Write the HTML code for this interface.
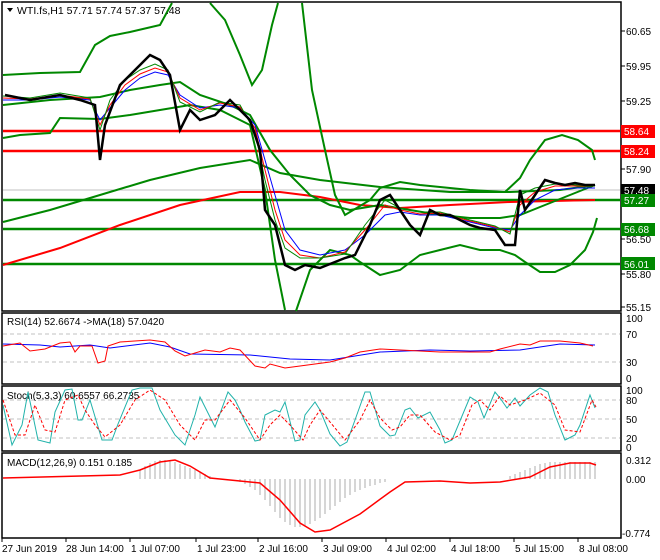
<!DOCTYPE html>
<html><head><meta charset="utf-8"><style>
body{margin:0;background:#fff;width:660px;height:560px;overflow:hidden;font-family:"Liberation Sans",sans-serif}
svg{display:block}
text{font-family:"Liberation Sans",sans-serif;font-size:10px;fill:#000}
</style></head><body>
<svg width="660" height="560" viewBox="0 0 660 560">
<rect width="660" height="560" fill="#fff"/>
<g fill="none" stroke="#000" stroke-width="1.5">
<rect x="2" y="2" width="619" height="309"/>
<rect x="2" y="313" width="619" height="71"/>
<rect x="2" y="386" width="619" height="65"/>
<rect x="2" y="453" width="619" height="85"/>
</g>
<line x1="3" y1="190" x2="620" y2="190" stroke="#c0c0c0"/>
<g stroke-width="2.5" fill="none">
<line x1="3" y1="131" x2="620" y2="131" stroke="#f00"/>
<line x1="3" y1="151" x2="620" y2="151" stroke="#f00"/>
<line x1="3" y1="200" x2="620" y2="200" stroke="#080"/>
<line x1="3" y1="229" x2="620" y2="229" stroke="#080"/>
<line x1="3" y1="264" x2="620" y2="264" stroke="#080"/>
</g>
<g fill="none" stroke-width="2">
<polyline stroke="#f00" points="3,265 60,248 120,225 180,205 240,192 280,192 320,197 360,205 400,208 450,205 510,202 595,200"/>
<polyline stroke="#080" points="3,222 50,210 100,195 150,180 200,168 250,160 280,173 320,180 380,187 450,192 510,192 560,190 595,185"/>
<polyline stroke="#080" points="3,105 50,100 100,97 130,90 160,85 180,82 200,95 230,105 250,115 270,150 290,175 310,195 330,205 350,210 380,205 410,210 440,215 470,218 500,218 520,215 545,205 570,195 595,185"/>
<polyline stroke="#080" points="3,75 40,73 80,72 95,45 110,36 130,32 160,25 172,3"/>
<polyline stroke="#080" points="210,3 225,20 240,55 252,85 262,70 272,25 278,3"/>
<polyline stroke="#080" points="302,3 312,90 325,150 335,195 345,215 370,200 380,188 400,182 420,185 440,187 470,190 505,192 520,178 530,160 545,140 562,135 578,140 592,150 595,160"/>
<polyline stroke="#080" points="3,138 20,135 50,133 60,118 100,119 130,115 160,110 190,105 220,110 250,125 265,190 275,260 285,310"/>
<polyline stroke="#080" points="296,311 310,270 330,250 350,255 360,262 380,275 400,270 420,255 440,250 460,245 480,250 500,250 515,255 525,262 540,272 555,272 570,265 585,250 593,232 597,218"/>
</g>
<g fill="none" stroke-width="1">
<polyline stroke="#00f" points="3,100 30,100 60,97 90,100 100,120 110,108 125,90 140,78 155,72 168,75 180,95 200,108 220,105 240,108 255,125 265,160 275,195 285,230 300,250 320,255 345,250 365,235 385,215 400,212 420,215 440,215 470,222 495,228 510,230 520,215 535,200 555,190 575,188 595,188"/>
<polyline stroke="#f00" points="3,98 30,99 60,95 90,99 100,125 110,105 125,85 140,74 155,68 168,72 180,98 200,110 220,103 240,107 255,128 265,170 275,210 285,240 300,255 320,258 345,252 365,230 385,205 400,210 420,214 440,213 470,221 495,227 510,232 520,205 535,192 555,186 575,186 595,186"/>
<polyline stroke="#080" points="3,96 30,98 60,93 90,98 100,130 110,100 125,80 140,70 155,64 168,70 180,102 200,112 220,102 240,105 255,132 265,180 275,220 285,248 300,258 320,258 345,254 365,225 385,200 400,208 420,212 440,212 470,220 495,226 510,234 520,195 535,188 555,184 575,185 595,186"/>
</g>
<polyline fill="none" stroke="#000" stroke-width="2.5" points="5,95 30,100 60,95 80,100 95,105 100,160 105,125 120,85 140,65 150,55 160,60 170,75 180,130 190,110 200,120 215,115 230,100 240,110 250,120 260,150 265,210 275,225 285,265 295,270 305,265 320,268 335,262 345,258 355,255 360,245 370,225 380,200 390,195 400,210 410,225 420,235 430,210 440,215 450,215 460,220 470,225 480,228 495,230 505,245 515,245 520,190 525,210 535,195 545,180 555,183 565,185 575,183 585,185 595,185"/>
<path d="M7 8 L13 8 L10 12 Z" fill="#000"/>
<text x="17" y="14" style="font-size:10.5px">WTI.fs,H1  57.71 57.74 57.37 57.48</text>
<g stroke="#000"><path d="M621 31h4M621 66h4M621 101h4M621 169h4M621 239h4M621 274h4M621 307h4"/></g>
<text x="626" y="35">60.65</text><text x="626" y="70">59.95</text><text x="626" y="105">59.25</text>
<text x="626" y="173">57.90</text><text x="626" y="243">56.50</text><text x="626" y="278">55.80</text><text x="626" y="311">55.15</text>
<rect x="621" y="125" width="34" height="13" fill="#f00"/><text x="624" y="135" style="fill:#fff">58.64</text>
<rect x="621" y="145" width="34" height="13" fill="#f00"/><text x="624" y="155" style="fill:#fff">58.24</text>
<rect x="621" y="184" width="34" height="13" fill="#000"/><text x="624" y="194" style="fill:#fff">57.48</text>
<rect x="621" y="194" width="34" height="13" fill="#080"/><text x="624" y="204" style="fill:#fff">57.27</text>
<rect x="621" y="223" width="34" height="13" fill="#080"/><text x="624" y="233" style="fill:#fff">56.68</text>
<rect x="621" y="257" width="34" height="13" fill="#080"/><text x="624" y="268" style="fill:#fff">56.01</text>
<g stroke="#c0c0c0" stroke-dasharray="4,3"><line x1="3" y1="334" x2="620" y2="334"/><line x1="3" y1="362" x2="620" y2="362"/></g>
<text x="7" y="325">RSI(14) 52.6674  -&gt;MA(18) 57.0420</text>
<polyline fill="none" stroke="#00f" points="3,344 40,345 60,347 90,345 110,348 150,343 170,347 190,354 250,355 290,359 330,360 380,352 430,350 470,351 520,350 560,344 595,345"/>
<polyline fill="none" stroke="#f00" points="3,346 20,343 30,351 45,349 60,343 70,342 75,352 80,346 92,346 98,363 105,361 108,346 120,342 150,340 165,342 175,351 185,356 205,350 220,352 230,348 240,350 255,366 265,368 270,364 285,368 300,366 330,362 345,358 360,352 380,349 400,350 420,351 440,352 470,352 490,352 500,349 520,344 530,345 540,341 560,341 580,343 593,346"/>
<text x="626" y="322">100</text><text x="626" y="338">70</text><text x="626" y="366">30</text><text x="626" y="382">0</text>
<g stroke="#c0c0c0" stroke-dasharray="4,3"><line x1="3" y1="400" x2="620" y2="400"/><line x1="3" y1="419" x2="620" y2="419"/><line x1="3" y1="438" x2="620" y2="438"/></g>
<text x="7" y="399">Stoch(5,3,3) 60.6557 66.2735</text>
<polyline fill="none" stroke="#20b2aa" points="3,405 12,445 22,425 28,392 38,440 50,443 55,412 65,390 72,389 78,420 82,420 90,400 102,440 112,440 118,424 132,390 140,388 152,388 160,410 175,435 185,445 195,415 200,397 205,407 215,427 228,392 235,400 240,410 245,422 255,441 260,440 265,415 275,410 280,412 285,402 295,441 300,440 305,415 315,402 320,410 330,434 340,446 347,442 355,420 365,392 370,392 380,426 390,436 395,435 405,410 410,408 418,418 430,412 440,430 445,443 452,440 470,397 478,402 484,418 495,392 500,398 507,408 515,398 520,406 530,395 540,388 548,392 555,415 565,440 575,435 580,425 590,395 595,408"/>
<polyline fill="none" stroke="#f00" stroke-dasharray="3,2" points="3,400 15,435 25,435 35,405 45,430 55,432 65,400 78,395 85,410 95,425 105,437 120,425 135,400 150,390 165,400 180,425 195,440 205,420 215,420 230,400 245,418 260,440 270,425 280,415 290,425 303,440 310,425 320,410 335,428 345,440 360,420 370,400 380,418 392,430 400,427 410,415 420,415 435,432 450,440 460,435 472,405 480,400 490,410 500,396 510,405 525,400 540,393 555,405 565,430 580,432 592,400 596,407"/>
<text x="626" y="394">100</text><text x="626" y="404">80</text><text x="626" y="423">50</text><text x="626" y="442">20</text><text x="626" y="451">0</text>
<text x="7" y="466">MACD(12,26,9) 0.151 0.185</text>
<path stroke="#bbb" stroke-width="1.2" fill="none" d="M140 479V470M145 479V466M150 479V463M155 479V461M160 479V460M165 479V460M170 479V461M175 479V462M180 479V464M185 479V466M190 479V468M195 479V470M200 479V472M205 479V474M210 479V476M215 479V478M265 479V500M270 479V506M275 479V512M280 479V518M285 479V522M290 479V525M295 479V527M300 479V527M305 479V526M310 479V524M315 479V521M320 479V518M325 479V514M330 479V510M335 479V506M340 479V502M345 479V498M350 479V495M355 479V492M360 479V490M365 479V488M370 479V486M375 479V485M380 479V483M385 479V482M255 479V490M260 479V495M245 479V484M250 479V487M240 479V482M510 479V476M515 479V474M520 479V472M525 479V470M530 479V468M535 479V466M540 479V464M545 479V463M550 479V462M555 479V462M560 479V462M565 479V462M570 479V462M575 479V462M580 479V462M585 479V462M590 479V462M595 479V462"/>
<polyline fill="none" stroke="#f00" stroke-width="1.5" points="3,478 120,475 140,470 160,462 175,460 190,466 210,478 240,481 260,483 280,500 300,523 315,532 330,530 360,514 390,492 405,482 440,481 470,483 500,482 530,477 550,467 570,463 590,463 596,465"/>
<text x="626" y="464">0.312</text><text x="626" y="483">0.00</text><text x="622" y="537">-0.774</text>
<g stroke="#000"><path d="M2 538v4M66 538v4M130 538v4M196 538v4M258 538v4M322 538v4M386 538v4M450 538v4M514 538v4M578 538v4"/></g>
<text x="2" y="552">27 Jun 2019</text><text x="66" y="552">28 Jun 14:00</text><text x="131" y="552">1 Jul 07:00</text>
<text x="197" y="552">1 Jul 23:00</text><text x="259" y="552">2 Jul 16:00</text><text x="323" y="552">3 Jul 09:00</text>
<text x="387" y="552">4 Jul 02:00</text><text x="451" y="552">4 Jul 18:00</text><text x="515" y="552">5 Jul 15:00</text><text x="579" y="552">8 Jul 08:00</text>
</svg>
</body></html>
